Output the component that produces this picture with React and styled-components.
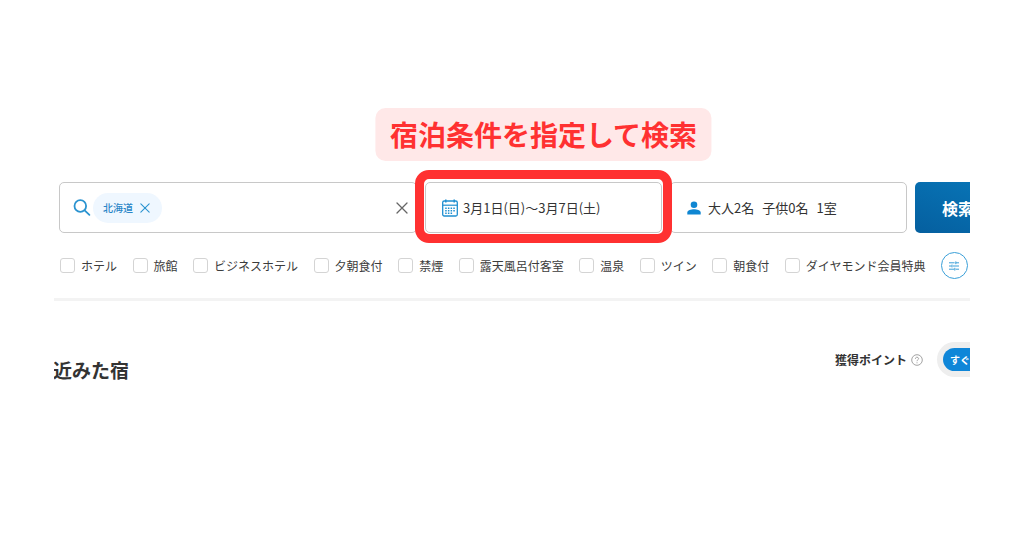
import React, { useState } from 'react';
import styled, { createGlobalStyle } from 'styled-components';

const FILTERS = [
    'ホテル',
    '旅館',
    'ビジネスホテル',
    '夕朝食付',
    '禁煙',
    '露天風呂付客室',
    '温泉',
    'ツイン',
    '朝食付',
    'ダイヤモンド会員特典',
];

function SearchIcon() {
    return (
        <svg width='18' height='18' viewBox='0 0 18 18' fill='none' stroke='#2a93d0' strokeWidth='1.8' strokeLinecap='round'>
            <circle cx='7.3' cy='7' r='5.8' />
            <path d='M11.6 11.3L16.4 15.8' />
        </svg>
    );
}

function CrossIcon({ size, color }) {
    return (
        <svg width={ size } height={ size } viewBox='0 0 12 12' fill='none' stroke={ color } strokeWidth='1.3' strokeLinecap='round'>
            <path d='M1 1L11 11M11 1L1 11' />
        </svg>
    );
}

function CalendarIcon() {
    return (
        <svg width='16' height='18' viewBox='0 0 16 18' fill='none' stroke='#1f8fd0'>
            <rect x='.7' y='2' width='14.6' height='15' rx='1.5' strokeWidth='1.3' />
            <path d='M.7 6.2H15.3' strokeWidth='1.2' />
            <path d='M3.8 .5V3.5M12.2 .5V3.5' strokeWidth='1.5' />
            <path d='M3.2 9.2H13M3.2 11.7H13M3.2 14.2H10.4' strokeWidth='1.4' strokeDasharray='1.5 1.2' />
        </svg>
    );
}

function PersonIcon() {
    return (
        <svg width='14' height='14' viewBox='0 0 14 14' fill='#0f86d2'>
            <circle cx='7' cy='3.7' r='3.3' />
            <path d='M.3 13.4V11.6C.3 9.4 4.2 8.3 7 8.3S13.7 9.4 13.7 11.6V13.4Z' />
        </svg>
    );
}

function TuneIcon() {
    return (
        <svg width='10' height='10' viewBox='0 0 10 10' fill='none' stroke='#3a9fd8' strokeWidth='1'>
            <path d='M0 1.8H5.6M7 1.8H10M0 5H2.6M4 5H10M0 8.2H5M6.6 8.2H10' />
            <path d='M6.8 .4V3.2M3 3.6V6.4M5.8 6.8V9.6' />
        </svg>
    );
}

function HelpIcon() {
    return (
        <svg width='12' height='12' viewBox='0 0 12 12' fill='none' stroke='#999' strokeWidth='.9'>
            <circle cx='6' cy='6' r='5.3' />
            <path d='M4.4 4.8C4.4 2.6 7.6 2.7 7.6 4.7C7.6 5.8 6 5.8 6 7.2M6 8.3V9.3' />
        </svg>
    );
}

function App() {
    const [ checked, setChecked ] = useState([]);
    const [ area, setArea ] = useState('北海道');
    const [ keyword, setKeyword ] = useState('');

    function handleToggle(name) {
        setChecked(checked.includes(name) ? checked.filter(c => c !== name) : [...checked, name]);
    }
    function handleClear() {
        setArea('');
        setKeyword('');
    }

    return (
        <StyledPage>
            <GlobalStyle />
            <StyledSearchBar>
                <StyledAreaField>
                    <SearchIcon />
                    {area && (
                        <StyledTag>
                            {area}
                            <StyledIconButton type='button' aria-label='削除' onClick={ () => setArea('') }>
                                <CrossIcon size={ 10 } color='#2a93d0' />
                            </StyledIconButton>
                        </StyledTag>
                    )}
                    <StyledInput aria-label='エリア' value={ keyword } onChange={ e => setKeyword(e.target.value) } />
                    <StyledIconButton type='button' aria-label='クリア' onClick={ handleClear }>
                        <CrossIcon size={ 12 } color='#666' />
                    </StyledIconButton>
                </StyledAreaField>
                <StyledHighlight>
                    <StyledCallout>宿泊条件を指定して検索</StyledCallout>
                    <StyledField type='button' $gap={ 5 }>
                        <CalendarIcon />
                        <span>3月1日(日)～3月7日(土)</span>
                    </StyledField>
                </StyledHighlight>
                <StyledField type='button' $gap={ 7 }>
                    <PersonIcon />
                    <StyledGuests>
                        <span>大人2名</span>
                        <span>子供0名</span>
                        <span>1室</span>
                    </StyledGuests>
                </StyledField>
                <StyledSubmit type='submit'>検索</StyledSubmit>
            </StyledSearchBar>
            <StyledFilters>
                {FILTERS.map(name => (
                    <StyledFilter key={ name }>
                        <StyledCheckbox type='checkbox' checked={ checked.includes(name) } onChange={ () => handleToggle(name) } />
                        {name}
                    </StyledFilter>
                ))}
                <StyledTuneButton type='button' aria-label='絞り込み'>
                    <TuneIcon />
                </StyledTuneButton>
            </StyledFilters>
            <StyledDivider />
            <StyledRecent>
                <StyledHeading>近みた宿</StyledHeading>
                <StyledPoints>
                    獲得ポイント
                    <HelpIcon />
                </StyledPoints>
                <StyledSwitch>
                    <StyledSwitchOption type='button'>すぐ</StyledSwitchOption>
                </StyledSwitch>
            </StyledRecent>
        </StyledPage>
    );
}

const GlobalStyle = createGlobalStyle`
    * {
        box-sizing: border-box;
    }
    body {
        margin: 0;
        background: #fff;
        color: #333;
        font-family: 'Noto Sans CJK JP', sans-serif;
    }
    button, input {
        font-family: inherit;
        color: inherit;
    }
    svg {
        display: block;
        flex-shrink: 0;
    }
`;

const StyledPage = styled.main`
    margin: 0 54px;
    padding-top: 182px;
    overflow: hidden;
`;

/* the submit button runs past the right edge of the page area */
const StyledSearchBar = styled.form`
    display: flex;
    gap: 8px;
    height: 51px;
    margin: 0 -31px 0 5px;
`;

const StyledAreaField = styled.div`
    display: flex;
    align-items: center;
    flex: 1;
    min-width: 0;
    padding: 0 8px 0 13px;
    border: 1px solid #c8c8c8;
    border-radius: 5px;
`;

const StyledTag = styled.span`
    display: flex;
    align-items: center;
    gap: 7px;
    height: 30px;
    margin-left: 2px;
    padding: 0 12px 0 10px;
    border-radius: 15px;
    background: #eff7ff;
    color: #2a86c8;
    font-size: 10px;
    font-weight: 500;
    white-space: nowrap;
`;

const StyledIconButton = styled.button`
    padding: 0;
    border: 0;
    background: none;
    cursor: pointer;
`;

const StyledInput = styled.input`
    flex: 1;
    min-width: 0;
    padding: 0 8px;
    border: 0;
    outline: 0;
    background: none;
    font-size: 13px;
`;

const StyledField = styled.button`
    display: flex;
    align-items: center;
    gap: ${props => props.$gap}px;
    width: 237px;
    height: 100%;
    padding: 0 16px;
    border: 1px solid #c8c8c8;
    border-radius: 5px;
    background: #fff;
    font-size: 13px;
    white-space: nowrap;
    cursor: pointer;
`;

const StyledGuests = styled.span`
    display: flex;
    gap: 8px;
`;

const StyledHighlight = styled.div`
    position: relative;

    &::after {
        content: '';
        position: absolute;
        inset: -12px -10px -10px;
        border: 9px solid #ff3131;
        border-radius: 14px;
        pointer-events: none;
        z-index: 1;
    }
`;

const StyledCallout = styled.div`
    position: absolute;
    bottom: 100%;
    left: 50%;
    margin-bottom: 21px;
    padding: 0 14px;
    transform: translateX(-50%);
    border-radius: 10px;
    background: #ffe8e8;
    color: #ff3131;
    font-size: 28px;
    font-weight: 700;
    line-height: 53px;
    white-space: nowrap;
`;

const StyledSubmit = styled.button`
    padding: 0 27px;
    border: 0;
    border-radius: 5px;
    background: linear-gradient(200deg, #0876b8, #055f9f);
    color: #fff;
    font-size: 16px;
    font-weight: 700;
    white-space: nowrap;
    cursor: pointer;
`;

const StyledFilters = styled.div`
    display: flex;
    align-items: center;
    justify-content: space-between;
    gap: 8px;
    margin: 19px 2px 19px 6px;
`;

const StyledFilter = styled.label`
    display: flex;
    align-items: center;
    gap: 6px;
    color: #3c3c3c;
    font-size: 12px;
    line-height: 16px;
    white-space: nowrap;
    cursor: pointer;
`;

const StyledCheckbox = styled.input`
    appearance: none;
    width: 15px;
    height: 15px;
    margin: 0;
    border: 1px solid #d4d4d4;
    border-radius: 3px;
    background: #fff;

    &:checked {
        border-color: #0f86d2;
        background: #0f86d2;
    }
`;

const StyledTuneButton = styled.button`
    display: flex;
    align-items: center;
    justify-content: center;
    flex-shrink: 0;
    width: 27px;
    height: 27px;
    padding: 0;
    border: 1px solid #3a9fd8;
    border-radius: 50%;
    background: #fff;
    cursor: pointer;
`;

const StyledDivider = styled.hr`
    height: 3px;
    margin: 0;
    border: 0;
    background: #f3f3f3;
`;

const StyledRecent = styled.section`
    display: flex;
    margin: 41px 0 0 -1px;
`;

const StyledHeading = styled.h2`
    flex: 1;
    margin: 14px 0 0;
    font-size: 19px;
    font-weight: 700;
    line-height: 28px;
    white-space: nowrap;
`;

const StyledPoints = styled.div`
    display: flex;
    align-items: center;
    gap: 4px;
    height: 35px;
    font-size: 12px;
    font-weight: 700;
    white-space: nowrap;
`;

const StyledSwitch = styled.div`
    width: 33px;
    height: 35px;
    margin-left: 14px;
    padding: 6px 0 6px 6px;
    border-radius: 18px 0 0 18px;
    background: #eee;
`;

const StyledSwitchOption = styled.button`
    display: block;
    width: 100%;
    height: 23px;
    padding: 0 0 0 7px;
    border: 0;
    border-radius: 12px 0 0 12px;
    background: #0f86d8;
    color: #fff;
    font-size: 10px;
    font-weight: 700;
    text-align: left;
    white-space: nowrap;
    cursor: pointer;
`;

export default App;
